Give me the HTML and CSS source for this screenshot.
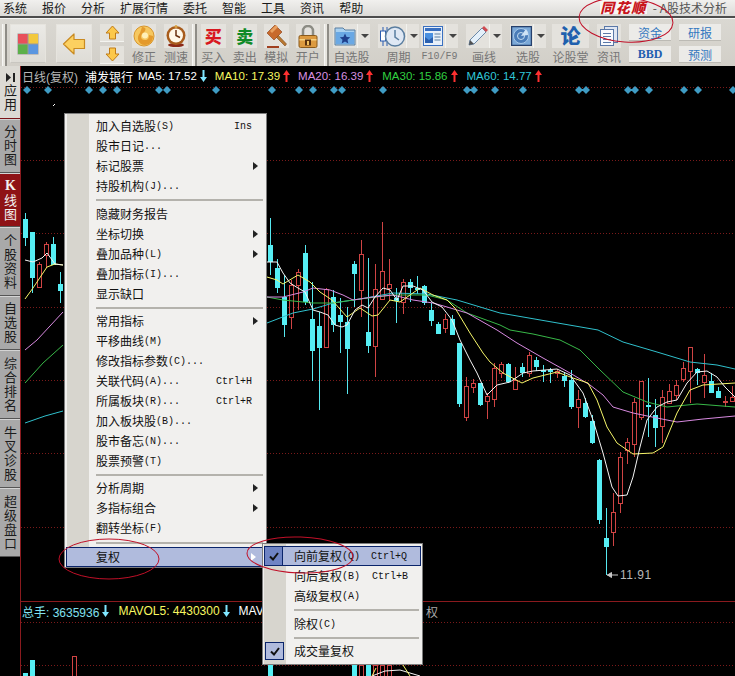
FILE: index.html
```html
<!DOCTYPE html>
<html lang="zh-CN">
<head>
<meta charset="utf-8">
<title>同花顺 - A股技术分析</title>
<link rel="stylesheet" href="styles.css">
</head>
<body>
<div class="app">
  <header class="menubar">
    <nav class="menu-items">
      <span>系统</span><span>报价</span><span>分析</span><span>扩展行情</span><span>委托</span><span>智能</span><span>工具</span><span>资讯</span><span>帮助</span>
    </nav>
    <div class="brand"><span class="logo">同花顺</span><span class="brand-sub">- A股技术分析</span></div>
  </header>

  <div class="toolbar">
    <i class="grip"></i>
    <div class="group group-a">
      <div class="bigbtn"><svg width="22" height="22" viewBox="0 0 22 22"><rect x="0.5" y="0.5" width="21" height="21" fill="#999"/><rect x="1" y="1" width="9.5" height="9.5" fill="#e8505a"/><rect x="11.5" y="1" width="9.5" height="9.5" fill="#f2c83c"/><rect x="1" y="11.5" width="9.5" height="9.5" fill="#5cb04a"/><rect x="11.5" y="11.5" width="9.5" height="9.5" fill="#5a96e0"/></svg></div>
      <div class="bigbtn"><svg width="24" height="24" viewBox="0 0 24 24"><path d="M1.5 12 12 2v5.500h10.500v9H12V22z" fill="#fcd060" stroke="#c98a20" stroke-width="1.200" stroke-linejoin="round"/></svg></div>
      <div class="stack-arrows">
        <div class="arrowbtn"><svg width="15" height="15" viewBox="0 0 15 15"><path d="M7.500 1 14 8h-3.500v6h-6V8H1z" fill="#fcc84a" stroke="#c07c18" stroke-linejoin="round"/></svg></div>
        <div class="arrowbtn"><svg width="15" height="15" viewBox="0 0 15 15"><path d="M7.500 14 14 7h-3.500V1h-6v6H1z" fill="#fcc84a" stroke="#c07c18" stroke-linejoin="round"/></svg></div>
      </div>
      <div class="tool"><div class="ticon"><svg width="22" height="22" viewBox="0 0 22 22"><circle cx="11" cy="11" r="10" fill="#f6c860" stroke="#d8962c"/><path d="M9 2c5 0 4 4 1 6-3 2-3 7 2 7 3 0 4-2 4-5l4 1c0 6-4 9-8 9-7 0-9-8-5-12z" fill="#e49a2c"/><circle cx="12" cy="10.500" r="3" fill="#fff0b8"/></svg></div><span class="tlabel">修正</span></div>
      <div class="tool"><div class="ticon"><svg width="22" height="22" viewBox="0 0 22 22"><ellipse cx="11" cy="20" rx="8" ry="2" fill="#8c2a18"/><circle cx="11" cy="10.500" r="9.500" fill="#a85c1c"/><circle cx="11" cy="10.500" r="7" fill="#fff8e8"/><path d="M11 5v5.500l4 2" fill="none" stroke="#6a3010" stroke-width="1.500"/><circle cx="11" cy="1.500" r="1.500" fill="#d8a040"/></svg></div><span class="tlabel">测速</span></div>
    </div>
    <i class="grip"></i>
    <div class="group group-b">
      <div class="tool"><div class="ticon glyph buy">买</div><span class="tlabel">买入</span></div>
      <div class="tool"><div class="ticon glyph sell">卖</div><span class="tlabel">卖出</span></div>
      <div class="tool"><div class="ticon"><svg width="24" height="24" viewBox="0 0 24 24"><path d="M3 22h12v2H3z" fill="#a04020"/><path d="M11 12 21 22l1.500-2L13 10z" fill="#b87830" stroke="#80481c" stroke-width=".6"/><path d="M3 9 11 1l7 7-8 8z" fill="#c86a2c" stroke="#8a3c14" stroke-width=".6"/><path d="M6 7l6-6 2 2-6 6z" fill="#e8a060"/></svg></div><span class="tlabel">模拟</span></div>
      <div class="tool"><div class="ticon"><svg width="22" height="23" viewBox="0 0 22 23"><path d="M6 11V6a5 5 0 0 1 10 0v5" fill="none" stroke="#8c8c84" stroke-width="2.500"/><rect x="2" y="10.500" width="18" height="12" rx="1.500" fill="#dc9a40" stroke="#8a5a1c"/><rect x="2.500" y="14" width="17" height="1.500" fill="#f6d080"/><rect x="8" y="14.500" width="6" height="6" fill="#5a3210"/><rect x="10" y="16" width="2" height="4" fill="#f0c060"/></svg></div><span class="tlabel">开户</span></div>
    </div>
    <i class="grip"></i>
    <div class="group group-c">
      <div class="tool tool-fav"><div class="dropbtn"><div class="dicon"><svg width="22" height="20" viewBox="0 0 22 20"><path d="M1 4V2h8l2 2h10v15H1z" fill="#a8d0f0" stroke="#5a7ea0"/><rect x="2" y="6" width="18" height="12" fill="#6aa8e4"/><path d="M11 7.500l1.600 3.400 3.600.4-2.700 2.500.8 3.600-3.300-1.900-3.300 1.900.8-3.600-2.700-2.500 3.600-.4z" fill="#1f3f8c"/></svg></div><i class="caret"></i></div><span class="tlabel">自选股</span></div>
      <div class="tool tool-period"><div class="dropbtn"><div class="dicon"><svg width="27" height="23" viewBox="0 0 27 23"><path d="M4 2v19M8 2v19" stroke="#2a5cb0"/><rect x="1.500" y="6" width="5" height="10" fill="#fff" stroke="#2a5cb0"/><circle cx="16" cy="11.500" r="9.500" fill="#dfe8f4" stroke="#5a7ea0" stroke-width="1.500"/><path d="M16 5v7l4 3" fill="none" stroke="#5a7ea0" stroke-width="1.500"/></svg></div><i class="caret"></i></div><span class="tlabel">周期</span></div>
      <div class="tool tool-f10"><div class="dropbtn"><div class="dicon"><svg width="20" height="20" viewBox="0 0 20 20"><rect x=".5" y=".5" width="19" height="19" fill="#e8f0fa" stroke="#3a70c0"/><rect x="2" y="2" width="16" height="3" fill="#3a70c0"/><path d="M2 7h8v10H2z" fill="#4a90e0"/><path d="M2 11l4 3 4-3v6H2z" fill="#2a60b0"/><path d="M11.500 8h6M11.500 11h6M11.500 14h6" stroke="#5a7ea0"/></svg></div><i class="caret"></i></div><span class="tlabel tlabel-mono">F10/F9</span></div>
      <div class="tool tool-draw"><div class="dropbtn"><div class="dicon"><svg width="22" height="22" viewBox="0 0 22 22"><path d="M3 15 15 3l4 4L7 19l-5 1z" fill="#e4f0fa" stroke="#6a88a8"/><path d="M15 3l2-2 4 4-2 2z" fill="#d04a50"/><path d="M2 20l1-5 4 4z" fill="#505050"/></svg></div><i class="caret"></i></div><span class="tlabel">画线</span></div>
      <div class="tool tool-draw"><div class="dropbtn"><div class="dicon"><svg width="21" height="20" viewBox="0 0 21 20"><rect x=".5" y=".5" width="20" height="19" fill="#7aa8d8" stroke="#26406c" stroke-width="1.500"/><circle cx="10" cy="10" r="7.500" fill="#4a7cb8" stroke="#a8c8e8"/><circle cx="10" cy="10" r="3.500" fill="none" stroke="#c4dcf0"/><path d="M10 10 15 3a8 8 0 0 1 2 6z" fill="#d0e4f6"/></svg></div><i class="caret"></i></div><span class="tlabel">选股</span></div>
      <div class="tool tool-lun"><div class="ticon glyph lun">论</div><span class="tlabel">论股堂</span></div>
      <div class="tool"><div class="ticon"><svg width="18" height="20" viewBox="0 0 18 20"><rect x="4.500" y=".5" width="13" height="16" fill="#dfe6f2" stroke="#5a78a8"/><rect x=".5" y="3.500" width="13" height="16" fill="#f8fafe" stroke="#5a78a8"/><path d="M3 7.500h8M3 10.500h8M3 13.500h8M3 16.500h8" stroke="#5a78a8"/></svg></div><span class="tlabel">资讯</span></div>
    </div>
    <div class="group group-d">
      <div class="stack-links"><div class="linkbtn">资金</div><div class="linkbtn linkbtn-bbd">BBD</div></div>
      <div class="stack-links"><div class="linkbtn">研报</div><div class="linkbtn">预测</div></div>
    </div>
  </div>

  <main class="workspace">
    <aside class="sidebar">
      <div class="tab tab-app"><svg class="tab-icon" width="9" height="9" viewBox="0 0 9 9"><path d="M0 0 5 4.500 0 9z M7 0h2v9H7z" fill="#222"/></svg><span class="tab-text">应用</span></div>
      <div class="tab tab-3"><span class="tab-text">分时图</span></div>
      <div class="tab tab-3 tab-active"><span class="tab-text"><b class="tab-k">K</b>线图</span></div>
      <div class="tab tab-4"><span class="tab-text">个股资料</span></div>
      <div class="tab tab-3"><span class="tab-text">自选股</span></div>
      <div class="tab tab-4"><span class="tab-text">综合排名</span></div>
      <div class="tab tab-4"><span class="tab-text">牛叉诊股</span></div>
      <div class="tab tab-4"><span class="tab-text">超级盘口</span></div>
    </aside>

    <section class="chart">
      <svg class="chart-svg" width="715" height="610" viewBox="20 66 715 610">
        <g class="grid">
          <path d="M21 87.500H735M21 160.500H735M21 233.500H735M21 307.500H735M21 380.500H735M21 453.500H735M21 527.500H735M21 622.500H735M21 665.500H735"/>
        </g>
        <path class="axis" d="M20.500 66V676M21 601.500H735"/>
        <path class="diamonds" d="M27 86l4 4-4 4-4-4zM48 86l4 4-4 4-4-4zM89 86l4 4-4 4-4-4zM103 86l4 4-4 4-4-4zM117 86l4 4-4 4-4-4zM159 86l4 4-4 4-4-4zM167 86l4 4-4 4-4-4zM216 86l4 4-4 4-4-4zM272 86l4 4-4 4-4-4zM299 86l4 4-4 4-4-4zM313 86l4 4-4 4-4-4zM334 86l4 4-4 4-4-4zM342 86l4 4-4 4-4-4zM383 86l4 4-4 4-4-4zM467 86l4 4-4 4-4-4zM474 86l4 4-4 4-4-4zM495 86l4 4-4 4-4-4zM523 86l4 4-4 4-4-4zM579 86l4 4-4 4-4-4zM586 86l4 4-4 4-4-4zM628 86l4 4-4 4-4-4zM635 86l4 4-4 4-4-4zM649 86l4 4-4 4-4-4zM684 86l4 4-4 4-4-4zM698 86l4 4-4 4-4-4zM733 86l4 4-4 4-4-4z"/>
        <path class="speck" d="M53 106l2-2"/>

        <path class="wick-up" d="M25.500 213V246M32.500 232V293M53.500 237V265M60.500 272V303M270.500 218V275M277.500 259V293M284.500 275V337M305.500 245V305M312.500 282V381M319.500 312V410M333.500 290V332M340.500 298V353M347.500 307V394M354.500 261V307M368.500 258V353M396.500 288V323M410.500 279V302M417.500 276V294M424.500 285V305M431.500 303V326M438.500 322V334M452.500 315V335M459.500 343V407M480.500 383V406M508.500 363V383M522.500 363V377M536.500 357V371M543.500 365V382M550.500 368V383M564.500 372V387M571.500 370V409M585.500 398V418M592.500 415V444M599.500 459V524M606.500 508V575M648.500 378V437M655.500 399V447M697.500 368V385M711.500 373V393M718.500 387V398"/>
        <path class="body-up" d="M23 219h5v19h-5zM30 232h5v46h-5zM51 244h5v21h-5zM58 284h5v7h-5zM268 245h5v17h-5zM275 268h5v20h-5zM282 297h5v28h-5zM303 253h5v49h-5zM310 319h5v32h-5zM317 326h5v22h-5zM331 297h5v28h-5zM338 315h5v7h-5zM345 322h5v27h-5zM352 264h5v10h-5zM366 332h5v14h-5zM394 298h5v3h-5zM408 282h5v6h-5zM415 288h5v2h-5zM422 286h5v17h-5zM429 310h5v11h-5zM436 324h5v10h-5zM450 319h5v16h-5zM457 343h5v61h-5zM478 383h5v22h-5zM506 364h5v18h-5zM520 367h5v6h-5zM534 360h5v7h-5zM541 370h5v2h-5zM548 370h5v2h-5zM562 376h5v5h-5zM569 380h5v27h-5zM583 403h5v14h-5zM590 421h5v22h-5zM597 460h5v60h-5zM604 538h5v9h-5zM646 405h5v2h-5zM653 415h5v13h-5zM695 369h5v4h-5zM709 381h5v12h-5zM716 391h5v7h-5zM23 673h5v3h-5zM30 660h5v16h-5zM268 665h5v11h-5zM352 665h5v11h-5zM366 665h5v11h-5z"/>
        <path class="wick-down" d="M39.500 262V287M46.500 242V268M291.500 280V329M298.500 269V310M326.500 288V348M361.500 240V317M375.500 264V377M382.500 222V299M389.500 259V300M403.500 279V314M445.500 314V333M466.500 377V421M473.500 379V393M487.500 393V419M494.500 363V407M501.500 362V378M515.500 367V390M529.500 352V377M557.500 369V378M578.500 390V428M613.500 493V546M620.500 452V513M627.500 438V464M634.500 398V457M641.500 381V420M662.500 390V443M669.500 384V403M676.500 380V400M683.500 362V382M690.500 347V403M704.500 354V398M725.500 396V407M732.500 386V402"/>
        <path class="body-down" d="M37.500 264.500h4v23h-4zM44.500 244.500h4v11h-4zM289.500 285.500h4v32h-4zM296.500 272.500h4v13h-4zM324.500 289.500h4v58h-4zM359.500 254.500h4v36h-4zM373.500 289.500h4v57h-4zM380.500 271.500h4v28h-4zM387.500 284.500h4v4h-4zM401.500 282.500h4v20h-4zM443.500 319.500h4v9h-4zM464.500 386.500h4v31h-4zM471.500 383.500h4v4h-4zM485.500 396.500h4v5h-4zM492.500 368.500h4v31h-4zM499.500 364.500h4v9h-4zM513.500 380.500h4v9h-4zM527.500 355.500h4v18h-4zM555.500 371.500h4v2h-4zM576.500 399.500h4v8h-4zM611.500 512.500h4v20h-4zM618.500 457.500h4v46h-4zM625.500 442.500h4v8h-4zM632.500 402.500h4v42h-4zM639.500 381.500h4v36h-4zM660.500 397.500h4v29h-4zM667.500 391.500h4v12h-4zM674.500 385.500h4v10h-4zM681.500 368.500h4v11h-4zM688.500 347.500h4v24h-4zM702.500 375.500h4v7h-4zM723.500 401.500h4v1h-4zM730.500 397.500h4v4h-4zM72.500 656.500h4v20h-4zM359.500 665.500h4v11h-4zM373.500 665.500h4v11h-4zM380.500 665.500h4v11h-4zM387.500 665.500h4v11h-4z"/>

        <polyline class="ln ln-cyan" points="25,423 45,416 63,411"/>
        <polyline class="ln ln-green" points="25,383 43,363 63,345"/>
        <polyline class="ln ln-pink" points="25,350 37,340 63,312"/>
        <polyline class="ln ln-yellow" points="25,299 33,288 47,267 55,264 63,265"/>
        <polyline class="ln ln-white" points="25,260 33,262 42,258 47,253 55,264 63,265"/>

        <polyline class="ln ln-cyan" points="267,323 293,313 313,309 333,303 360,299 393,293 427,294 457,300 500,313 598,330 623,342 657,352 690,362 717,365 735,369"/>
        <polyline class="ln ln-green" points="267,297 283,300 313,303 333,303 360,299 393,295 427,295 447,300 467,313 500,325 510,330 533,334 560,340 580,350 600,370 623,392 647,402 667,407 697,404 735,407"/>
        <polyline class="ln ln-pink" points="267,297 283,297 303,292 313,288 330,290 343,295 353,300 373,297 393,295 413,300 433,303 447,307 467,313 497,330 517,343 543,358 570,373 590,385 603,395 613,407 633,413 657,418 677,422 703,419 735,416"/>
        <polyline class="ln ln-yellow" points="267,277 277,280 283,284 298,275 310,282 320,292 332,300 347,317 360,308 372,316 378,315 390,300 400,302 420,288 433,295 447,300 455,308 470,333 483,353 490,362 503,373 522,383 533,378 557,372 573,378 588,383 597,400 607,427 617,443 633,454 653,453 663,447 677,413 690,390 703,385 735,383"/>
        <polyline class="ln ln-white" points="267,262 277,262 283,273 290,283 298,288 305,292 313,310 320,312 328,315 335,325 342,327 347,325 355,310 362,305 368,308 375,297 383,288 390,290 397,300 403,286 413,286 423,290 432,302 442,307 452,320 460,340 470,360 477,373 487,395 497,385 510,382 523,373 533,371 557,369 570,375 583,393 593,420 603,453 612,487 618,496 627,495 633,477 640,447 647,420 657,407 667,402 677,400 687,383 697,372 707,371 717,377 725,387 735,397"/>
        <polyline class="ln ln-white" points="372,676 385,671 400,670 420,676"/>
        <polyline class="ln ln-yellow" points="403,665 410,676"/>
        <polyline class="ln ln-yellow" points="372,676 376,668"/>

        <path class="lowmark" d="M607 575H618M607.500 575l4-2.500v5z"/>
        <text class="lowtext" x="620" y="579">11.91</text>
      </svg>

      <div class="info-row">
        <span class="period-name">日线(复权)</span>
        <span class="stock-name">浦发银行</span>
        <span class="ma ma-white">MA5: 17.52<svg class="arr" width="7" height="12" viewBox="0 0 7 12"><path d="M2.500 0h2v7H7l-3.500 5L0 7h2.500z" fill="#7fe6ff"/></svg></span>
        <span class="ma ma-yellow">MA10: 17.39<svg class="arr" width="7" height="12" viewBox="0 0 7 12"><path d="M2.500 12h2V5H7L3.500 0 0 5h2.500z" fill="#ff3030"/></svg></span>
        <span class="ma ma-pink">MA20: 16.39<svg class="arr" width="7" height="12" viewBox="0 0 7 12"><path d="M2.500 12h2V5H7L3.500 0 0 5h2.500z" fill="#ff3030"/></svg></span>
        <span class="ma ma-green">MA30: 15.86<svg class="arr" width="7" height="12" viewBox="0 0 7 12"><path d="M2.500 12h2V5H7L3.500 0 0 5h2.500z" fill="#ff3030"/></svg></span>
        <span class="ma ma-cyan">MA60: 14.77<svg class="arr" width="7" height="12" viewBox="0 0 7 12"><path d="M2.500 12h2V5H7L3.500 0 0 5h2.500z" fill="#ff3030"/></svg></span>
      </div>

      <div class="vol-row">
        <span class="ma ma-sky">总手: 3635936<svg class="arr" width="7" height="12" viewBox="0 0 7 12"><path d="M2.500 0h2v7H7l-3.500 5L0 7h2.500z" fill="#7fe6ff"/></svg></span>
        <span class="ma ma-yellow">MAVOL5: 4430300<svg class="arr" width="7" height="12" viewBox="0 0 7 12"><path d="M2.500 0h2v7H7l-3.500 5L0 7h2.500z" fill="#7fe6ff"/></svg></span>
        <span class="ma ma-white">MAV</span>
      </div>
      <span class="vol-tail">权</span>

      <div class="popup main-menu">
        <div class="item">加入自选股<span class="l">(S)</span><span class="key">Ins</span></div>
        <div class="item">股市日记<span class="l">...</span></div>
        <div class="item">标记股票<i class="sub"></i></div>
        <div class="item">持股机构<span class="l">(J)...</span></div>
        <div class="sep sep-8"></div>
        <div class="item">隐藏财务报告</div>
        <div class="item">坐标切换<i class="sub"></i></div>
        <div class="item">叠加品种<span class="l">(L)</span><i class="sub"></i></div>
        <div class="item">叠加指标<span class="l">(I)...</span></div>
        <div class="item">显示缺口</div>
        <div class="sep"></div>
        <div class="item">常用指标<i class="sub"></i></div>
        <div class="item">平移曲线<span class="l">(M)</span></div>
        <div class="item">修改指标参数<span class="l">(C)...</span></div>
        <div class="item">关联代码<span class="l">(A)...</span><span class="key">Ctrl+H</span></div>
        <div class="item">所属板块<span class="l">(R)...</span><span class="key">Ctrl+R</span></div>
        <div class="item">加入板块股<span class="l">(B)...</span></div>
        <div class="item">股市备忘<span class="l">(N)...</span></div>
        <div class="item">股票预警<span class="l">(T)</span></div>
        <div class="sep"></div>
        <div class="item">分析周期<i class="sub"></i></div>
        <div class="item">多指标组合<i class="sub"></i></div>
        <div class="item">翻转坐标<span class="l">(F)</span></div>
        <div class="sep sep-9"></div>
        <div class="item item-on">复权<i class="sub sub-on"></i></div>
      </div>

      <div class="popup sub-menu">
        <div class="item item-on"><span class="check check-on"><svg width="10" height="9" viewBox="0 0 10 9"><path d="M1 4.500 4 7.500 9 1" fill="none" stroke="#111" stroke-width="2"/></svg></span>向前复权<span class="l">(Q)</span><span class="key">Ctrl+Q</span></div>
        <div class="item">向后复权<span class="l">(B)</span><span class="key">Ctrl+B</span></div>
        <div class="item">高级复权<span class="l">(A)</span></div>
        <div class="sep sep-8"></div>
        <div class="item">除权<span class="l">(C)</span></div>
        <div class="sep"></div>
        <div class="item"><span class="check"><svg width="10" height="9" viewBox="0 0 10 9"><path d="M1 4.500 4 7.500 9 1" fill="none" stroke="#111" stroke-width="2"/></svg></span>成交量复权</div>
      </div>
    </section>
  </main>

  <svg class="annotations" width="735" height="676" viewBox="0 0 735 676">
    <ellipse cx="626" cy="20" rx="47" ry="22" transform="rotate(4 626 20)"/>
    <ellipse cx="109" cy="559" rx="50" ry="20"/>
    <ellipse cx="300" cy="555" rx="53" ry="18" transform="rotate(2 300 555)"/>
  </svg>
</div>
</body>
</html>
```

FILE: styles.css
```css
* { box-sizing: border-box; }
html, body { margin: 0; padding: 0; background: #000; }
body { font-family: "Liberation Sans", "Noto Sans CJK SC", sans-serif; font-size: 12px; color: #000; overflow: hidden; }
.app { position: relative; width: 735px; height: 676px; display: flex; flex-direction: column; overflow: hidden; }

/* menu bar */
.menubar { height: 18px; flex: none; display: flex; justify-content: space-between; background: linear-gradient(#f1f0ee, #dcdbd8); border-bottom: 2px solid #4c4c4c; }
.menu-items { display: flex; gap: 15px; padding-left: 3px; line-height: 15px; font-family: "Noto Sans CJK SC", sans-serif; color: #1a1a1a; }
.brand { display: flex; align-items: flex-start; padding-right: 8px; }
.logo { font-family: "Noto Sans CJK SC", sans-serif; font-weight: 900; font-style: italic; font-size: 14px; line-height: 14px; color: #c8141c; letter-spacing: 1.500px; background: #f8f6f4; }
.brand-sub { margin-left: 6px; line-height: 15px; color: #555; font-family: "Noto Sans CJK SC", sans-serif; }

/* toolbar */
.toolbar { height: 48px; flex: none; display: flex; padding: 5px 0 0 2px; gap: 4px; background: linear-gradient(#dad8d2, #d2cfc8); border-top: 1px solid #f4f4f2; }
.grip { width: 5px; height: 42px; flex: none; border-left: 1px solid #f6f6f4; border-right: 2px solid #8e8c86; background: #e8e6e0; }
.group { display: flex; flex: none; }
.group-a { gap: 8px; margin-left: -1px; }
.group-a .bigbtn + .bigbtn { margin-left: 2px; }
.group-b { gap: 7px; }
.group-b .tool { width: 24.500px; }
.group-c { gap: 8px; }
.group-d { gap: 8px; margin-left: 4px; }
.bigbtn { width: 36px; height: 39px; display: flex; align-items: center; justify-content: center; background: linear-gradient(#ebeae6, #dedcd6); border: 1px solid #e6e4de; border-bottom-color: #c8c6c0; }
.stack-arrows { display: flex; flex-direction: column; gap: 4px; width: 24px; }
.arrowbtn { height: 18px; display: flex; align-items: center; justify-content: center; background: #e4e2dc; border-bottom: 1px solid #f4f4f0; }
.tool { width: 24px; flex: none; display: flex; flex-direction: column; align-items: center; }
.tool-fav { width: 37px; }
.tool-period { width: 41px; }
.tool-f10 { width: 37px; margin-left: -6px; }
.tool-draw { width: 36px; }
.tool-lun { width: 37px; margin-left: -2px; }
.ticon { width: 100%; height: 24px; flex: none; display: flex; align-items: center; justify-content: center; background: #e4e2dd; }
.glyph { font-family: "Noto Sans CJK SC", sans-serif; font-weight: 900; font-size: 17px; line-height: 24px; }
.buy { color: #d81820; }
.sell { color: #108a28; }
.lun { color: #2060ae; font-size: 20px; line-height: 22px; }
.dropbtn { width: 100%; height: 24px; flex: none; display: flex; background: #e4e2dd; }
.dicon { flex: 1; display: flex; align-items: center; justify-content: center; }
.caret { width: 13px; flex: none; align-self: stretch; border-left: 1px solid #f2f2ee; position: relative; }
.caret::after { content: ""; position: absolute; left: 3px; top: 10px; border: 4px solid transparent; border-top: 4px solid #444; border-bottom-width: 0; }
.tlabel { font-family: "Noto Sans CJK SC", sans-serif; line-height: 15px; margin-top: 1px; color: #767676; white-space: nowrap; }
.tlabel-mono { font-family: "Liberation Mono", monospace; font-size: 10px; }
.stack-links { width: 42px; display: flex; flex-direction: column; gap: 5px; }
.linkbtn { height: 17px; line-height: 17px; text-align: center; font-family: "Noto Sans CJK SC", sans-serif; color: #3478c0; background: #ecebe8; border-bottom: 1px solid #bcbab4; }
.linkbtn-bbd { font-family: "Liberation Serif", serif; font-weight: 700; font-size: 12px; color: #1f5eb0; }

/* workspace */
.workspace { flex: 1; display: flex; min-height: 0; background: #000; }
.sidebar { width: 20px; flex: none; display: flex; flex-direction: column; }
.tab { flex: none; width: 20px; display: flex; flex-direction: column; align-items: center; justify-content: center; background: #a9a9a9; border-top: 1px solid #d4d4d4; border-bottom: 1px solid #555; color: #1c1c1c; }
.tab-app { height: 53px; background: #dcdad4; justify-content: flex-start; padding-top: 7px; gap: 2px; border-top: 0; border-bottom: 1px solid #7a1418; }
.tab-3 { height: 54px; }
.tab-4 { height: 69px; }
.tab-active { background: #8e1216; color: #f2f2f2; }
.tab-k { font-family: "Liberation Serif", serif; font-weight: 700; font-size: 14px; }
.tab-text { font-family: "Noto Sans CJK SC", sans-serif; font-size: 13px; line-height: 14px; letter-spacing: 1px; writing-mode: vertical-rl; text-orientation: upright; }
.tab-icon { flex: none; }

.chart { position: relative; width: 715px; flex: none; background: #000; }
.chart-svg { position: absolute; top: 0; left: 0; display: block; }
.grid path { stroke: #7a1a1a; stroke-width: 1; stroke-dasharray: 1 2; fill: none; }
.axis { stroke: #8a1a1e; fill: none; stroke-width: 1; }
.diamonds { fill: #3f9cc4; }
.speck { stroke: #fff; fill: none; }
.wick-up { stroke: #56e8f0; fill: none; shape-rendering: crispEdges; }
.body-up { fill: #56eef4; shape-rendering: crispEdges; }
.wick-down { stroke: #d04444; fill: none; shape-rendering: crispEdges; }
.body-down { stroke: #d04444; fill: #000; shape-rendering: crispEdges; }
.ln { fill: none; stroke-width: 1; stroke-linejoin: round; }
.ln-white { stroke: #f4f4f4; }
.ln-yellow { stroke: #f6f66a; }
.ln-pink { stroke: #d88ae0; }
.ln-green { stroke: #38b848; }
.ln-cyan { stroke: #30c0cc; }
.lowmark { stroke: #c8c8c8; fill: #c8c8c8; stroke-width: 1; }
.lowtext { fill: #b8b8b8; font-family: "Liberation Sans", sans-serif; font-size: 12px; letter-spacing: .5px; }

.info-row, .vol-row { position: absolute; left: 2px; height: 20px; display: flex; align-items: center; gap: 8px; white-space: nowrap; }
.info-row { top: 0; }
.vol-row { top: 535px; gap: 9px; }
.vol-row .ma { font-size: 12px; }
.period-name { color: #b8b8b8; margin-right: -1px; }
.stock-name { color: #fff; margin-right: -3px; }
.ma { display: inline-flex; align-items: center; gap: 3px; font-size: 11.500px; }
.ma-white { color: #fff; }
.ma-yellow { color: #f8f860; }
.ma-pink { color: #d890e0; margin-right: 1px; }
.ma-green { color: #30d040; margin-right: 1px; }
.ma-cyan { color: #30c8d8; }
.ma-sky { color: #80e0f0; }
.arr { flex: none; }
.vol-tail { position: absolute; left: 406px; top: 536px; line-height: 20px; color: #aaa; font-family: "Noto Sans CJK SC", sans-serif; }

/* popup menus */
.popup { position: absolute; font-family: "Noto Sans CJK SC", sans-serif; color: #111; border: 1px solid #7c7c7c; padding: 2px 0; }
.main-menu { left: 44px; top: 47px; width: 203px; padding-bottom: 0; background: linear-gradient(90deg, #f1f0ee 2px, #d7d5ce 2px, #d7d5ce 24px, #f1f0ee 24px); }
.sub-menu { left: 242px; top: 477px; width: 161px; padding-bottom: 3px; background: linear-gradient(90deg, #f1f0ee 1px, #d7d5ce 1px, #d7d5ce 23px, #f1f0ee 23px); }
.item { position: relative; height: 20px; line-height: 20px; padding-left: 31px; display: flex; align-items: center; white-space: nowrap; }
.sep { height: 7px; margin-left: 31px; margin-right: 3px; position: relative; }
.sep-8 { height: 8px; }
.sep-9 { height: 9px; }
.sep::after { content: ""; position: absolute; left: 0; right: 0; top: 3px; height: 2px; background: #b4b2ac; }
.sep-9::after { top: 4px; }
.l { font-family: "Liberation Mono", monospace; font-size: 10px; margin-top: 2px; }
.key { margin-left: auto; margin-right: 14px; font-family: "Liberation Mono", monospace; font-size: 10px; margin-top: 1px; }
.sub { margin-left: auto; margin-right: 8px; width: 0; height: 0; border-left: 5px solid #222; border-top: 4px solid transparent; border-bottom: 4px solid transparent; }
.sub-on { border-left-color: #fff; }
.item-on { margin: 0 2px 0 1px; padding-left: 30px; background: #b0bbdd; outline: 1px solid #0a246a; outline-offset: -1px; }
.sub-menu .item { padding-left: 31px; }
.sub-menu .item-on { margin: 0 1px; padding-left: 30px; }
.check { position: absolute; left: 2px; top: 1px; width: 19px; height: 18px; display: flex; align-items: center; justify-content: center; background: #b0bbdd; border: 1px solid #0a246a; }
.check-on { left: 0; top: 0; height: 20px; background: #6f84c4; }

/* hand-drawn marks on top of the screenshot */
.annotations { position: absolute; top: 0; left: 0; pointer-events: none; }
.annotations ellipse { fill: none; stroke: #c01028; stroke-width: 1; }
```
